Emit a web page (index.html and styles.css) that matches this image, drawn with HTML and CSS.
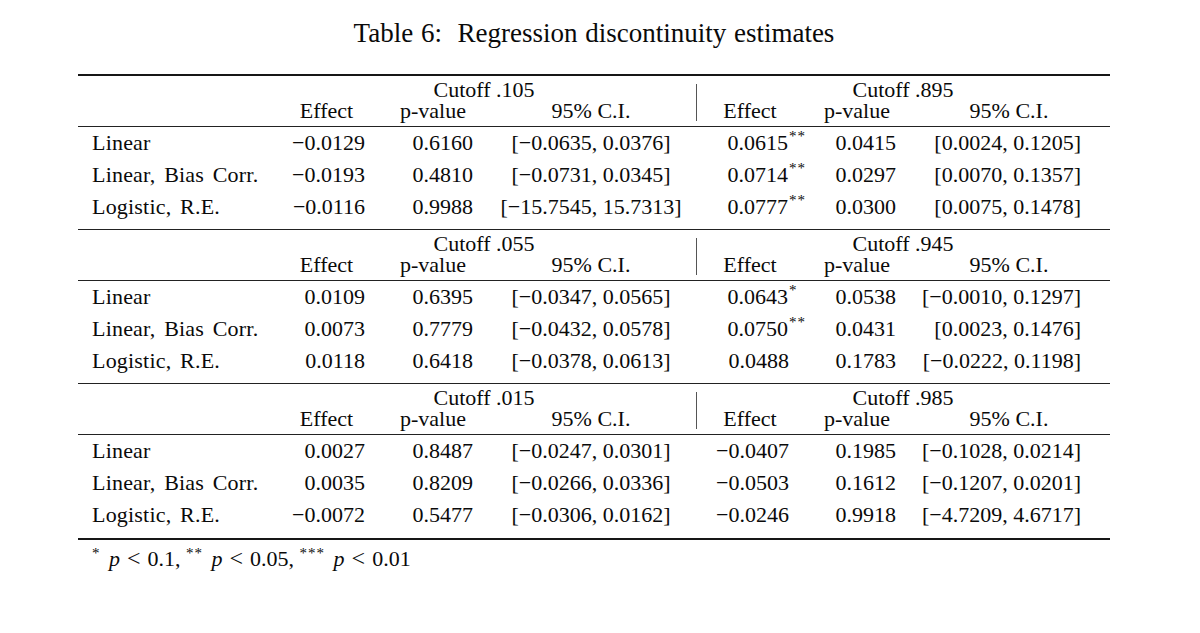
FILE: index.html
```html
<!DOCTYPE html>
<html lang="en">
<head>
<meta charset="utf-8">
<title>Table 6: Regression discontinuity estimates</title>
<link rel="stylesheet" href="styles.css">
</head>
<body>
<div class="page">
  <h1 class="caption">Table 6:&nbsp; Regression discontinuity estimates</h1>
  <div class="table">

    <section class="block first">
      <div class="grid head">
        <div class="cut cut-l">Cutoff .105</div>
        <div class="bar"></div>
        <div class="cut cut-r">Cutoff .895</div>
        <div class="h c2">Effect</div>
        <div class="h c4">p-value</div>
        <div class="h c6">95% C.I.</div>
        <div class="h c8">Effect</div>
        <div class="h c10">p-value</div>
        <div class="h c12">95% C.I.</div>
      </div>
      <div class="grid body">
        <div class="lab">Linear</div><div class="c2 r">−0.0129</div><div class="c4 r">0.6160</div><div class="c6 m">[−0.0635, 0.0376]</div><div class="c8 r">0.0615<span class="sig">**</span></div><div class="c10 r">0.0415</div><div class="c12 r">[0.0024, 0.1205]</div>
        <div class="lab">Linear, Bias Corr.</div><div class="c2 r">−0.0193</div><div class="c4 r">0.4810</div><div class="c6 m">[−0.0731, 0.0345]</div><div class="c8 r">0.0714<span class="sig">**</span></div><div class="c10 r">0.0297</div><div class="c12 r">[0.0070, 0.1357]</div>
        <div class="lab">Logistic, R.E.</div><div class="c2 r">−0.0116</div><div class="c4 r">0.9988</div><div class="c6 m">[−15.7545, 15.7313]</div><div class="c8 r">0.0777<span class="sig">**</span></div><div class="c10 r">0.0300</div><div class="c12 r">[0.0075, 0.1478]</div>
      </div>
    </section>

    <section class="block">
      <div class="grid head">
        <div class="cut cut-l">Cutoff .055</div>
        <div class="bar"></div>
        <div class="cut cut-r">Cutoff .945</div>
        <div class="h c2">Effect</div>
        <div class="h c4">p-value</div>
        <div class="h c6">95% C.I.</div>
        <div class="h c8">Effect</div>
        <div class="h c10">p-value</div>
        <div class="h c12">95% C.I.</div>
      </div>
      <div class="grid body">
        <div class="lab">Linear</div><div class="c2 r">0.0109</div><div class="c4 r">0.6395</div><div class="c6 m">[−0.0347, 0.0565]</div><div class="c8 r">0.0643<span class="sig">*</span></div><div class="c10 r">0.0538</div><div class="c12 r">[−0.0010, 0.1297]</div>
        <div class="lab">Linear, Bias Corr.</div><div class="c2 r">0.0073</div><div class="c4 r">0.7779</div><div class="c6 m">[−0.0432, 0.0578]</div><div class="c8 r">0.0750<span class="sig">**</span></div><div class="c10 r">0.0431</div><div class="c12 r">[0.0023, 0.1476]</div>
        <div class="lab">Logistic, R.E.</div><div class="c2 r">0.0118</div><div class="c4 r">0.6418</div><div class="c6 m">[−0.0378, 0.0613]</div><div class="c8 r">0.0488</div><div class="c10 r">0.1783</div><div class="c12 r">[−0.0222, 0.1198]</div>
      </div>
    </section>

    <section class="block last">
      <div class="grid head">
        <div class="cut cut-l">Cutoff .015</div>
        <div class="bar"></div>
        <div class="cut cut-r">Cutoff .985</div>
        <div class="h c2">Effect</div>
        <div class="h c4">p-value</div>
        <div class="h c6">95% C.I.</div>
        <div class="h c8">Effect</div>
        <div class="h c10">p-value</div>
        <div class="h c12">95% C.I.</div>
      </div>
      <div class="grid body">
        <div class="lab">Linear</div><div class="c2 r">0.0027</div><div class="c4 r">0.8487</div><div class="c6 m">[−0.0247, 0.0301]</div><div class="c8 r">−0.0407</div><div class="c10 r">0.1985</div><div class="c12 r">[−0.1028, 0.0214]</div>
        <div class="lab">Linear, Bias Corr.</div><div class="c2 r">0.0035</div><div class="c4 r">0.8209</div><div class="c6 m">[−0.0266, 0.0336]</div><div class="c8 r">−0.0503</div><div class="c10 r">0.1612</div><div class="c12 r">[−0.1207, 0.0201]</div>
        <div class="lab">Logistic, R.E.</div><div class="c2 r">−0.0072</div><div class="c4 r">0.5477</div><div class="c6 m">[−0.0306, 0.0162]</div><div class="c8 r">−0.0246</div><div class="c10 r">0.9918</div><div class="c12 r">[−4.7209, 4.6717]</div>
      </div>
    </section>

  </div>
  <p class="note"><span class="st">*</span> <i>p</i><span class="rel">&lt;</span>0.1, <span class="st">**</span> <i>p</i><span class="rel">&lt;</span>0.05, <span class="st">***</span> <i>p</i><span class="rel">&lt;</span>0.01</p>
</div>
</body>
</html>
```

FILE: styles.css
```css
html, body {
  margin: 0;
  padding: 0;
  background: #ffffff;
}

body {
  font-family: "Liberation Serif", "Times New Roman", serif;
  color: #0a0a0a;
  font-size: 22px;
}

.page {
  width: 1032px;
  margin-left: 78px;
  padding-top: 18px;
}

.caption {
  margin: 0 0 26px 0;
  font-size: 27px;
  font-weight: normal;
  line-height: 30px;
  text-align: center;
  word-spacing: 1px;
}

.table {
  border-bottom: 2px solid #161616;
}

.block {
  border-top: 1px solid #222222;
}

.block.first {
  border-top: 2px solid #161616;
}

.grid {
  display: grid;
  grid-template-columns: 210px 77px 28px 80px 17px 202px 19px 78px 29px 78px 21px 164px 29px;
}

.head {
  grid-template-rows: 21px 21px;
  line-height: 21px;
  padding: 3px 0 5px 0;
  border-bottom: 1px solid #222222;
  white-space: nowrap;
}

.cut {
  grid-row: 1;
  text-align: center;
}

.cut-l {
  grid-column: 2 / 7;
  padding-right: 12px;
}

.cut-r {
  grid-column: 8 / 13;
  padding-left: 14px;
}

.bar {
  grid-column: 7;
  grid-row: 1 / 3;
  margin: 5px 0 0 4px;
  border-left: 1px solid #555555;
}

.h {
  grid-row: 2;
  text-align: center;
}

.head .c12 {
  padding-left: 20px;
}

.body {
  line-height: 32px;
  padding-bottom: 6px;
  white-space: nowrap;
}

.last .body {
  padding-bottom: 7px;
}

.lab {
  grid-column: 1;
  padding-left: 14px;
  letter-spacing: 0.2px;
  word-spacing: 3px;
}

.c2 { grid-column: 2; }
.c4 { grid-column: 4; }
.c6 { grid-column: 6; }
.c8 { grid-column: 8; }
.c10 { grid-column: 10; }
.c12 { grid-column: 12; }

.r { text-align: right; }
.m { text-align: center; }

.sig {
  display: inline-block;
  width: 0;
  font-size: 15px;
  line-height: 15px;
  vertical-align: 9px;
  white-space: nowrap;
  padding-left: 1px;
  letter-spacing: 1px;
}

.note {
  margin: 6px 0 0 0;
  padding-left: 14px;
  line-height: 24px;
  white-space: nowrap;
}

.note i {
  font-style: italic;
}

.rel {
  display: inline-block;
  margin: 0 7px;
  font-size: 24px;
}

.st {
  font-size: 15px;
  vertical-align: 8px;
  line-height: 15px;
  letter-spacing: 1px;
  margin-right: 3px;
}
```
